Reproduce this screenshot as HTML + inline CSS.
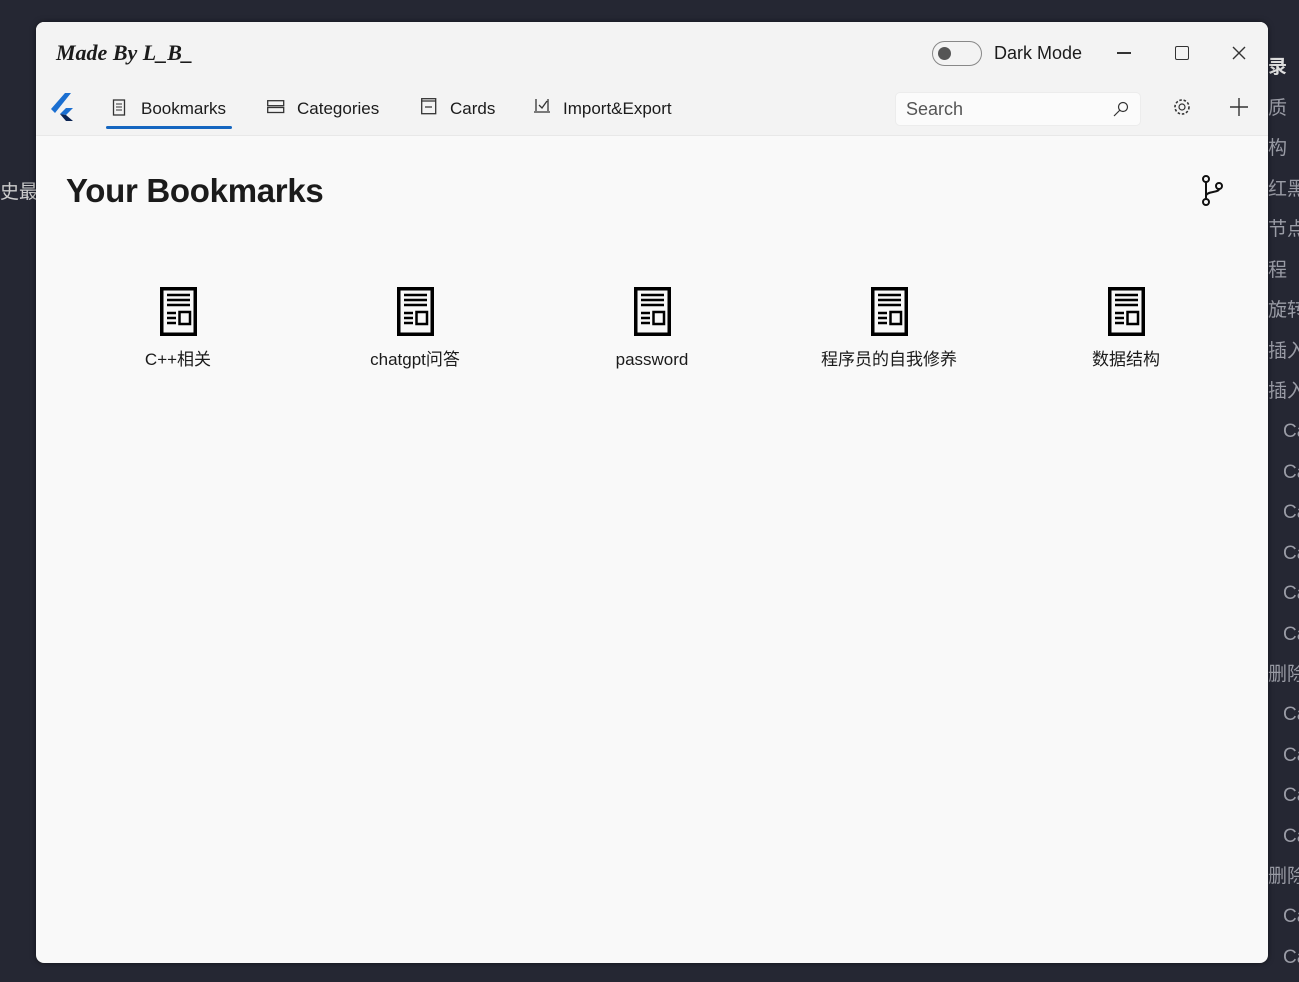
<!DOCTYPE html>
<html><head><meta charset="utf-8"><style>
*{margin:0;padding:0;box-sizing:border-box}
body{width:1299px;height:982px;background:#252733;position:relative;overflow:hidden;font-family:"Segoe UI","Liberation Sans","Noto Sans CJK SC",sans-serif;}
.side{position:absolute;color:#9a9ca6;font-size:19px;font-family:"Liberation Sans","Noto Sans CJK SC",sans-serif;white-space:nowrap;line-height:40.5px}
.win{position:absolute;left:36px;top:22px;width:1232px;height:941px;background:#f9f9f9;border-radius:8px;overflow:hidden;box-shadow:0 0 6px rgba(0,0,0,.5);z-index:2}
.top{position:absolute;left:0;top:0;width:100%;height:114px;background:#f3f3f3;border-bottom:1px solid #e8e8e8}
.t{position:absolute;color:#1b1b1b;white-space:nowrap}
.tab{font-size:17px;top:77px}
.item{position:absolute;top:265px;width:200px;text-align:center;font-size:17px;line-height:24px;color:#1b1b1b;z-index:3}
.item svg{display:block;margin:0 auto 12px}
</style></head><body>
<div class="side" style="left:0;top:173px;color:#ccc">史最</div>
<div class="side" style="left:1268px;top:48px;font-weight:bold;color:#ddd">录<br><span style="font-weight:normal;color:#9a9ca6">质<br>构<br>红黑<br>节点<br>程<br>旋转<br>插入<br>插入</span></div>
<div class="side" style="left:1283px;top:412px">Ca<br>Ca<br>Ca<br>Ca<br>Ca<br>Ca</div>
<div class="side" style="left:1268px;top:655px">删除</div>
<div class="side" style="left:1283px;top:695px">Ca<br>Ca<br>Ca<br>Ca</div>
<div class="side" style="left:1268px;top:857px">删除</div>
<div class="side" style="left:1283px;top:897px">Ca<br>Ca</div>
<div class="win">
<div class="top">
<div class="t" style="left:20px;top:18px;font-family:'Liberation Serif',serif;font-style:italic;font-weight:bold;font-size:22px">Made By L_B_</div>
<div style="position:absolute;left:896px;top:19px;width:50px;height:25px;border:1.5px solid #888;border-radius:13px"><div style="position:absolute;left:5px;top:5px;width:13px;height:13px;border-radius:50%;background:#555"></div></div>
<div class="t" style="left:958px;top:21px;font-size:18px">Dark Mode</div>
<div style="position:absolute;left:1081px;top:30px;width:14px;height:1.5px;background:#333"></div>
<div style="position:absolute;left:1139px;top:24px;width:14px;height:14px;border:1.5px solid #333;border-radius:2px"></div>
<svg style="position:absolute;left:1196px;top:24px" width="14" height="14"><path d="M1 1L13 13M13 1L1 13" stroke="#333" stroke-width="1.4"/></svg>
<svg style="position:absolute;left:14px;top:70px" width="30" height="34"><path d="M15 1L1 17l4 4L21 1z" fill="#1b6fd1"/><path d="M10 22l6-6h7l-7 7z" fill="#1b6fd1"/><path d="M10 22l6 7h7l-7-6z" fill="#0b2453"/></svg>
<svg style="position:absolute;left:76px;top:76px" width="14" height="18"><rect x="1.5" y="2" width="11" height="15" fill="none" stroke="#333" stroke-width="1.3"/><path d="M4 6h6M4 9h6M4 12h6" stroke="#333"/></svg>
<div class="t tab" style="left:105px">Bookmarks</div>
<div style="position:absolute;left:70px;top:104px;width:126px;height:3px;background:#1466c0;border-radius:2px"></div>
<svg style="position:absolute;left:231px;top:78px" width="18" height="14"><rect x="0.7" y="0.7" width="16" height="5" fill="none" stroke="#333" stroke-width="1.3"/><rect x="0.7" y="7.5" width="16" height="5" fill="none" stroke="#333" stroke-width="1.3"/></svg>
<div class="t tab" style="left:261px">Categories</div>
<svg style="position:absolute;left:385px;top:76px" width="16" height="17"><rect x="0.7" y="0.7" width="14" height="15" fill="none" stroke="#333" stroke-width="1.3"/><path d="M0 3h15M4 9h7" stroke="#333" stroke-width="1.3"/></svg>
<div class="t tab" style="left:414px">Cards</div>
<svg style="position:absolute;left:497px;top:76px" width="18" height="16"><path d="M3 1v12M15 1v12M1 14h16M6 7l3 3 5-7" fill="none" stroke="#333" stroke-width="1.3"/></svg>
<div class="t tab" style="left:527px">Import&amp;Export</div>
<div style="position:absolute;left:859px;top:70px;width:246px;height:34px;background:#fbfbfb;border-radius:5px;border:1px solid #ececec"></div>
<div class="t" style="left:870px;top:77px;font-size:18px;color:#555">Search</div>
<svg style="position:absolute;left:1077px;top:79px" width="16" height="16"><circle cx="10" cy="6" r="4.5" fill="none" stroke="#333" stroke-width="1.2"/><path d="M7 9L1 15" stroke="#333" stroke-width="1.2"/></svg>
<svg style="position:absolute;left:1136px;top:75px" width="20" height="20" viewBox="0 0 20 20"><circle cx="10" cy="10" r="3" fill="none" stroke="#333" stroke-width="1.2"/><circle cx="10" cy="10" r="7" fill="none" stroke="#333" stroke-width="1.6" stroke-dasharray="2.5 1.8"/></svg>
<svg style="position:absolute;left:1193px;top:75px" width="20" height="20"><path d="M10 1v18M1 10h18" stroke="#333" stroke-width="1.4"/></svg>
</div>
<div class="t" style="left:30px;top:150px;font-size:33px;font-weight:600;letter-spacing:-0.3px;color:#1b1b1b">Your Bookmarks</div>
<svg style="position:absolute;left:1164px;top:153px" width="26" height="32"><circle cx="6" cy="4" r="3" fill="none" stroke="#111" stroke-width="2"/><circle cx="6" cy="27" r="3" fill="none" stroke="#111" stroke-width="2"/><circle cx="19" cy="11" r="3" fill="none" stroke="#111" stroke-width="2"/><path d="M6 7v17M6 21c0-5 13-3 13-7" fill="none" stroke="#111" stroke-width="2"/></svg>
</div>
<svg width="0" height="0" style="position:absolute"><defs><g id="doc"><rect x="1.75" y="1.75" width="33.5" height="45.5" fill="none" stroke="#000" stroke-width="3.5"/><path d="M7 8h23M7 13h23M7 18h23M7 26h9M7 31h9M7 36h9" stroke="#000" stroke-width="2.5"/><rect x="19.5" y="25" width="10.5" height="12" fill="none" stroke="#000" stroke-width="2.5"/></g></defs></svg>
<div class="item" style="left:78px;top:287px"><svg width="37" height="49"><use href="#doc"/></svg>C++相关</div>
<div class="item" style="left:315px;top:287px"><svg width="37" height="49"><use href="#doc"/></svg>chatgpt问答</div>
<div class="item" style="left:552px;top:287px"><svg width="37" height="49"><use href="#doc"/></svg>password</div>
<div class="item" style="left:789px;top:287px"><svg width="37" height="49"><use href="#doc"/></svg>程序员的自我修养</div>
<div class="item" style="left:1026px;top:287px"><svg width="37" height="49"><use href="#doc"/></svg>数据结构</div>
</body></html>
